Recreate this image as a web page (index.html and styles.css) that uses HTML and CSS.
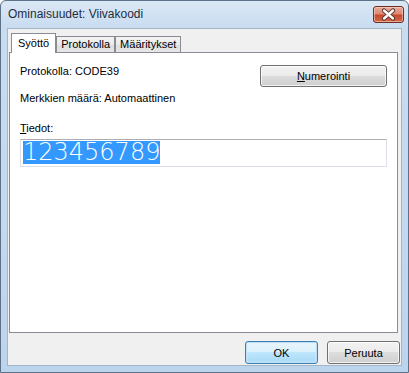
FILE: index.html
```html
<!DOCTYPE html>
<html lang="fi">
<head>
    <meta charset="UTF-8">
    <title>Ominaisuudet: Viivakoodi</title>
    <link rel="stylesheet" href="styles.css">
</head>
<body>
    <!-- ikkuna -->
    <div class="window">
        <div class="titlebar">
            <span class="title">Ominaisuudet: Viivakoodi</span>
            <button class="close-btn" title="Sulje">
                <svg width="29" height="15" viewBox="0 0 29 15">
                    <path d="M10 3.5 L19 11.5 M19 3.5 L10 11.5" stroke="#4a2a24" stroke-width="4.2" stroke-linecap="round"/>
                    <path d="M10 3.5 L19 11.5 M19 3.5 L10 11.5" stroke="#ffffff" stroke-width="2.4" stroke-linecap="round"/>
                </svg>
            </button>
        </div>

        <div class="client">
            <!-- välilehdet -->
            <div class="tabs">
                <div class="tab active">Syöttö</div>
                <div class="tab">Protokolla</div>
                <div class="tab">Määritykset</div>
            </div>

            <div class="panel">
                <div class="row">
                    <span class="label">Protokolla: CODE39</span>
                    <button class="btn btn-num"><u>N</u>umerointi</button>
                </div>
                <div class="label count">Merkkien määrä: Automaattinen</div>
                <div class="label data-label"><u>T</u>iedot:</div>
                <div class="textbox"><span class="selected">123456789</span></div>
            </div>

            <div class="footer">
                <button class="btn btn-default">OK</button>
                <button class="btn">Peruuta</button>
            </div>
        </div>
    </div>
</body>
</html>
```

FILE: styles.css
```css
/* sivu */
body {
    margin: 0;
    background: #ffffff;
    font-family: "Liberation Sans", Arial, sans-serif;
    font-size: 11px;
    color: #000000;
}

/* ikkunan kehys */
.window {
    width: 409px;
    height: 373px;
    box-sizing: border-box;
    border: 1px solid #5d7188;
    border-radius: 6px 6px 0 0;
    background: linear-gradient(180deg, #dbe8f6 0px, #c9dcf0 26px, #c4d8ee 60%, #bcd4ec 100%);
    display: flex;
    flex-direction: column;
    padding: 0 6px 6px 6px;
}

.titlebar {
    height: 27px;
    display: flex;
    justify-content: space-between;
    align-items: flex-start;
}
.title {
    padding-left: 1px;
    line-height: 27px;
    font-size: 12px;
    color: #1e2d3e;
}
.close-btn {
    margin-top: 5px;
    margin-right: -2px;
    width: 31px;
    height: 17px;
    padding: 0;
    border: 1px solid #6e2f22;
    border-radius: 3px;
    background: linear-gradient(180deg, #e9a999 0%, #dc8a74 45%, #c5482c 55%, #d26a4c 100%);
    box-shadow: inset 0 0 0 1px rgba(255, 220, 210, 0.55);
    display: flex;
    align-items: center;
    justify-content: center;
}

/* sisältöalue */
.client {
    flex: 1;
    border: 1px solid #a3b5c8;
    background: #f0f0f0;
    display: flex;
    flex-direction: column;
}

.tabs {
    display: flex;
    align-items: flex-end;
    padding: 4px 0 0 3px;
    position: relative;
    z-index: 1;
}
.tab {
    height: 15px;
    line-height: 15px;
    padding: 0 4px;
    border: 1px solid #898c95;
    border-bottom: none;
    background: linear-gradient(180deg, #f3f3f3 0%, #ebebeb 50%, #dedede 51%, #e6e6e6 100%);
}
.tab.active {
    height: 19px;
    line-height: 19px;
    padding: 0 6px;
    background: #ffffff;
    margin-bottom: -1px;
}

.panel {
    margin: 0 3px 0 1px;
    height: 281px;
    box-sizing: border-box;
    border: 1px solid #898c95;
    background: #ffffff;
    padding: 10px 10px 0 10px;
}

.label {
    line-height: 16px;
}
.row {
    display: flex;
    justify-content: space-between;
    align-items: flex-start;
}
.count {
    margin-top: 3px;
}
.data-label {
    margin-top: 14px;
}

/* painikkeet */
.btn {
    font-family: inherit;
    font-size: 11px;
    color: #000000;
    height: 23px;
    padding: 0;
    border: 1px solid #707070;
    border-radius: 3px;
    background: linear-gradient(180deg, #f2f2f2 0%, #ebebeb 49%, #dddddd 50%, #cfcfcf 100%);
    box-shadow: inset 0 0 0 1px rgba(255, 255, 255, 0.7);
}
.btn-num {
    margin-top: 2px;
    width: 127px;
    height: 22px;
}

.textbox {
    margin-top: 3px;
    height: 28px;
    box-sizing: border-box;
    border: 1px solid #dbdfe6;
    border-top-color: #abadb3;
    padding: 1px 2px;
}
.selected {
    display: inline-block;
    background: #3399ff;
    color: #ffffff;
    font-family: "DejaVu Sans", sans-serif;
    font-weight: 200;
    font-size: 24px;
    line-height: 23px;
}

.footer {
    display: flex;
    justify-content: flex-end;
    gap: 9px;
    margin-top: 8px;
    padding-right: 1px;
}
.footer .btn {
    width: 73px;
}
.btn-default {
    border-color: #3c7fb1;
    box-shadow: inset 0 0 0 1px #b9e0f7, inset 0 0 2px 1px #dcecfc;
    background: linear-gradient(180deg, #eaf6fd 0%, #d9f0fc 49%, #bee6fd 50%, #a7d9f5 100%);
}
```
